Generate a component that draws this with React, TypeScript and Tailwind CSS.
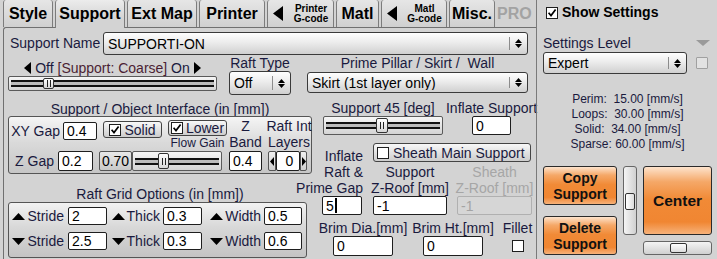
import React from "react";

type Dir = "l" | "r" | "u" | "d";

const POINTS: Record<Dir, string> = {
  l: "10,0 10,10 0,5",
  r: "0,0 0,10 10,5",
  u: "0,10 10,10 5,0",
  d: "0,0 10,0 5,10",
};

function Tri({ dir, w, h, className = "" }: { dir: Dir; w: number; h: number; className?: string }) {
  return (
    <svg width={w} height={h} viewBox="0 0 10 10" preserveAspectRatio="none" className={`shrink-0 ${className}`}>
      <polygon points={POINTS[dir]} fill="currentColor" />
    </svg>
  );
}

function CheckBox({ checked, className = "" }: { checked?: boolean; className?: string }) {
  return (
    <span className={`inline-flex h-[12px] w-[12px] shrink-0 items-center justify-center border border-[#1e1e1e] bg-white ${className}`}>
      {checked && (
        <svg width="10" height="10" viewBox="0 0 10 10">
          <path d="M1.6 4.8 L4 7.6 L8.6 1.6" fill="none" stroke="#000" strokeWidth="1.7" />
        </svg>
      )}
    </span>
  );
}

function Select({ value, className = "" }: { value: string; className?: string }) {
  return (
    <div
      className={`flex items-center rounded-[3px] border border-[#3a3a3a] bg-[linear-gradient(#fefefe,#ececec_45%,#d0d0d0)] ${className}`}
    >
      <span className="flex-1 truncate pl-[4px] text-[14px] leading-none text-black">{value}</span>
      <span className="h-[62%] w-px bg-[#8c8c8c]" />
      <span className="flex w-[17px] flex-col items-center gap-[1px] text-black">
        <Tri dir="u" w={7} h={4} />
        <Tri dir="d" w={7} h={4} />
      </span>
    </div>
  );
}

function Field({
  value,
  className = "",
  disabled,
  caret,
}: {
  value: string;
  className?: string;
  disabled?: boolean;
  caret?: boolean;
}) {
  return (
    <div
      className={`flex shrink-0 items-center rounded-[2px] border pl-[3px] text-[14px] leading-none ${
        disabled ? "border-[#b0b0b0] bg-[#d6d6d6] text-[#a4a4a4]" : "border-[#1e1e1e] bg-white text-black"
      } ${className}`}
    >
      {value}
      {caret && <span className="ml-px h-[15px] w-[2px] bg-black" />}
    </div>
  );
}

function Slider({ className = "", thumb = "" }: { className?: string; thumb?: string }) {
  return (
    <div
      className={`relative flex shrink-0 items-center rounded-[2px] border border-[#5a5a5a] bg-[linear-gradient(#f6f6f6,#d4d4d4)] px-[2px] ${className}`}
    >
      <div className="h-[7px] w-full border-y-2 border-[#111] bg-[#bcbcbc]" />
      <div
        className={`absolute top-px bottom-px flex items-center justify-center gap-[2px] rounded-[2px] border border-[#333] bg-[linear-gradient(#ffffff,#d6d6d6)] ${thumb}`}
      >
        <span className="h-[7px] w-px bg-[#222]" />
        <span className="h-[7px] w-px bg-[#222]" />
      </div>
    </div>
  );
}

function Btn({ children, className = "" }: { children: React.ReactNode; className?: string }) {
  return (
    <div
      className={`flex shrink-0 items-center rounded-[3px] border border-[#444] bg-[linear-gradient(#f8f8f8,#e2e2e2_50%,#cdcdcd)] text-[14px] leading-none ${className}`}
    >
      {children}
    </div>
  );
}

function OrangeBtn({ children, className = "" }: { children: React.ReactNode; className?: string }) {
  return (
    <div
      className={`flex flex-col items-center justify-center rounded-[3px] border border-[#2a2a2a] bg-[linear-gradient(#fde3cc,#f5a868_22%,#f18a36_48%,#f08632_82%,#f7b27a)] font-bold text-[#111] ${className}`}
    >
      {children}
    </div>
  );
}

function GridLabel({ dir, text, className }: { dir: Dir; text: string; className: string }) {
  return (
    <div className={`flex items-center justify-end gap-[2px] text-[14px] leading-none ${className}`}>
      <Tri dir={dir} w={13} h={7} className="text-black" />
      {text}
    </div>
  );
}

const tabs = [
  { label: "Style", w: "w-[50px]" },
  { label: "Support", w: "w-[70px]", active: true },
  { label: "Ext Map", w: "w-[70px]" },
  { label: "Printer", w: "w-[66px]" },
  { label: "Printer|G-code", w: "w-[67px]" },
  { label: "Matl", w: "w-[43px]" },
  { label: "Matl|G-code", w: "w-[66px]" },
  { label: "Misc.", w: "w-[46px]" },
];

export default function App() {
  return (
    <div className="flex h-[259px] w-[717px] overflow-hidden bg-[#d3d3d3] font-['Liberation_Sans',Arial,sans-serif] text-[#1a1a3e]">
      {/* settings panel */}
      <div className="flex w-[536px] flex-col">
        {/* tab bar */}
        <div className="relative z-10 flex h-[28px] items-start gap-[2px] pl-[3px]">
          {tabs.map((t) =>
            t.label.includes("|") ? (
              <div
                key={t.label}
                className={`flex h-[27px] ${t.w} items-center gap-[6px] rounded-t-[3px] border-x border-[#7c7c7c] bg-[linear-gradient(#e6e6e6,#d0d0d0)] pl-[5px] text-black`}
              >
                <Tri dir="l" w={10} h={15} />
                <div className="flex flex-1 flex-col items-center text-[10px] font-bold leading-[10px]">
                  <span>{t.label.split("|")[0]}</span>
                  <span>{t.label.split("|")[1]}</span>
                </div>
              </div>
            ) : (
              <div
                key={t.label}
                className={`flex ${t.w} items-center justify-center rounded-t-[3px] border-x border-[#7c7c7c] text-[16px] font-bold text-black ${
                  t.active ? "h-[28px] bg-[linear-gradient(#ececec,#d3d3d3_70%)]" : "h-[27px] bg-[linear-gradient(#e6e6e6,#d0d0d0)]"
                }`}
              >
                {t.label}
              </div>
            )
          )}
          <div className="flex h-[27px] w-[38px] items-center text-[16px] font-bold text-[#a3a3a3]">PRO</div>
        </div>

        <div className="-mt-px ml-[3px] flex-1 rounded-tl-[3px] border-t border-l border-[#707070]">
          {/* support name */}
          <div className="mt-[4px] flex h-[23px] items-center">
            <div className="w-[99px] pl-[6px] text-[14px]">Support Name</div>
            <Select value="SUPPORTI-ON" className="h-[23px] w-[425px]" />
          </div>

          {/* coarse slider / raft type / prime pillar */}
          <div className="flex h-[40px]">
            <div className="ml-[4px] flex w-[209px] flex-col">
              <div className="flex h-[21px] items-end justify-center gap-[4px] whitespace-nowrap text-[14px] leading-[16px]">
                <Tri dir="l" w={7} h={12} className="mb-[2px] text-black" />
                <span>
                  Off <span className="text-[#4b1f33]">[Support: Coarse]</span> On
                </span>
                <Tri dir="r" w={7} h={12} className="mb-[2px] text-black" />
              </div>
              <Slider className="h-[15px] w-[209px]" thumb="left-[34px] w-[11px]" />
            </div>
            <div className="ml-[12px] flex w-[62px] flex-col">
              <div className="h-[16px] text-center text-[14px] leading-[16px] whitespace-nowrap">Raft Type</div>
              <Select value="Off" className="h-[24px] w-[62px]" />
            </div>
            <div className="ml-[16px] flex w-[221px] flex-col">
              <div className="h-[17px] text-center text-[14px] leading-[16px] whitespace-pre">Prime Pillar / Skirt /  Wall</div>
              <Select value="Skirt (1st layer only)" className="h-[21px] w-[221px]" />
            </div>
          </div>

          <div className="flex">
            {/* left column */}
            <div className="ml-[4px] flex w-[304px] shrink-0 flex-col">
              <div className="h-[21px] pt-[6px] text-center text-[14px] leading-[16px] whitespace-nowrap">
                Support / Object Interface (in [mm])
              </div>
              <div className="flex h-[58px] flex-col rounded-[3px] border border-[#555] bg-[linear-gradient(#f5f5f5,#dadada_45%,#c6c6c6)]">
                <div className="flex h-[34px] items-start">
                  <div className="mt-[5px] flex h-[18px] items-center">
                    <div className="w-[54px] pr-[3px] text-right text-[14px]">XY Gap</div>
                    <Field value="0.4" className="h-[18px] w-[34px]" />
                  </div>
                  <Btn className="mt-[4px] ml-[6px] h-[17px] w-[59px] justify-center gap-[3px]">
                    <CheckBox checked />
                    Solid
                  </Btn>
                  <div className="ml-[6px] flex w-[59px] flex-col items-center">
                    <Btn className="mt-[3px] h-[16px] w-[59px] justify-center gap-[3px]">
                      <CheckBox checked />
                      Lower
                    </Btn>
                    <div className="text-[12px] leading-[14px] whitespace-nowrap">Flow Gain</div>
                  </div>
                  <div className="mt-[1px] ml-[2px] flex w-[33px] flex-col items-center text-[14px] leading-[16px]">
                    <span>Z</span>
                    <span>Band</span>
                  </div>
                  <div className="mt-[1px] ml-[5px] flex w-[44px] flex-col items-center text-[14px] leading-[16px] whitespace-nowrap">
                    <span>Raft Int</span>
                    <span>Layers</span>
                  </div>
                </div>
                <div className="flex h-[20px] items-center">
                  <div className="w-[49px] pr-[4px] text-right text-[14px]">Z Gap</div>
                  <Field value="0.2" className="h-[20px] w-[35px]" />
                  <div className="ml-[6px] flex h-[20px] w-[33px] items-center justify-center rounded-[2px] border border-[#555] bg-[linear-gradient(#e8e8e8,#c9c9c9)] text-[14px] text-black">
                    0.70
                  </div>
                  <Slider className="h-[20px] w-[90px]" thumb="left-[25px] w-[11px]" />
                  <Field value="0.4" className="ml-[7px] h-[20px] w-[33px]" />
                  <div className="ml-[6px] flex h-[20px]">
                    <div className="flex w-[8px] items-center justify-center rounded-l-[2px] border border-[#555] bg-[linear-gradient(#f0f0f0,#cfcfcf)] text-black">
                      <Tri dir="l" w={4} h={9} />
                    </div>
                    <Field value="0" className="h-[20px] w-[24px] justify-center pl-0" />
                    <div className="flex w-[7px] items-center justify-center rounded-r-[2px] border border-[#555] bg-[linear-gradient(#f0f0f0,#cfcfcf)] text-black">
                      <Tri dir="r" w={4} h={9} />
                    </div>
                  </div>
                </div>
              </div>

              <div className="flex h-[28px] items-end justify-center text-[14px] leading-[16px] whitespace-nowrap">
                Raft Grid Options (in [mm])
              </div>
              <div className="flex h-[56px] w-[299px] flex-col rounded-[3px] border border-[#555] bg-[linear-gradient(#f2f2f2,#d8d8d8_45%,#c4c4c4)]">
                <div className="mt-[4px] flex h-[18px]">
                  <GridLabel dir="u" text="Stride" className="w-[59px] pr-[4px]" />
                  <Field value="2" className="h-[18px] w-[39px]" />
                  <GridLabel dir="u" text="Thick" className="w-[56px] pr-[3px]" />
                  <Field value="0.3" className="h-[18px] w-[39px]" />
                  <GridLabel dir="u" text="Width" className="w-[62px] pr-[3px]" />
                  <Field value="0.5" className="h-[18px] w-[38px]" />
                </div>
                <div className="mt-[7px] flex h-[18px]">
                  <GridLabel dir="d" text="Stride" className="w-[59px] pr-[4px]" />
                  <Field value="2.5" className="h-[18px] w-[39px]" />
                  <GridLabel dir="d" text="Thick" className="w-[56px] pr-[3px]" />
                  <Field value="0.3" className="h-[18px] w-[39px]" />
                  <GridLabel dir="d" text="Width" className="w-[62px] pr-[3px]" />
                  <Field value="0.6" className="h-[18px] w-[38px]" />
                </div>
              </div>
            </div>

            {/* right column */}
            <div className="flex flex-1 flex-col">
              <div className="flex h-[40px]">
                <div className="ml-[11px] flex w-[120px] flex-col items-center">
                  <div className="h-[21px] pt-[5px] text-[14px] leading-[16px] whitespace-nowrap">Support 45 [deg]</div>
                  <Slider className="h-[19px] w-[120px]" thumb="left-[52px] w-[12px]" />
                </div>
                <div className="flex flex-1 flex-col items-center pr-[3px]">
                  <div className="h-[21px] pt-[5px] text-[14px] leading-[16px] whitespace-nowrap">Inflate Support</div>
                  <Field value="0" className="h-[19px] w-[39px]" />
                </div>
              </div>

              <div className="flex">
                <div className="flex w-[51px] flex-col items-end pt-[13px] text-[14px] leading-[16px] whitespace-nowrap">
                  <span>Inflate</span>
                  <span>Raft &amp;</span>
                  <span>Prime Gap</span>
                  <Field value="5" caret className="mr-px h-[19px] w-[40px]" />
                </div>
                <div className="ml-[10px] flex w-[160px] flex-col">
                  <Btn className="mt-[8px] h-[19px] w-[158px] gap-[4px] pl-[3px] whitespace-nowrap">
                    <CheckBox />
                    Sheath Main Support
                  </Btn>
                  <div className="mt-[2px] flex">
                    <div className="flex w-[74px] flex-col items-center text-[14px] leading-[16px] whitespace-nowrap">
                      <span>Support</span>
                      <span>Z-Roof [mm]</span>
                      <Field value="-1" className="h-[19px] w-[74px]" />
                    </div>
                    <div className="ml-[10px] flex w-[75px] flex-col items-center text-[14px] leading-[16px] whitespace-nowrap text-[#a6a6a6]">
                      <span>Sheath</span>
                      <span>Z-Roof [mm]</span>
                      <Field value="-1" disabled className="h-[19px] w-[75px]" />
                    </div>
                  </div>
                </div>
              </div>

              <div className="mt-[5px] flex text-[14px] leading-[16px] whitespace-nowrap">
                <div className="flex w-[102px] flex-col items-center">
                  <span>Brim Dia.[mm]</span>
                  <Field value="0" className="h-[20px] w-[60px]" />
                </div>
                <div className="flex w-[78px] flex-col items-center">
                  <span>Brim Ht.[mm]</span>
                  <Field value="0" className="h-[20px] w-[60px]" />
                </div>
                <div className="flex w-[51px] flex-col items-center">
                  <span>Fillet</span>
                  <CheckBox className="mt-[4px]" />
                </div>
              </div>
            </div>
          </div>
        </div>
      </div>

      {/* right sidebar */}
      <aside className="flex flex-1 flex-col border-l border-[#7a7a7a] px-[6px]">
        <div className="mt-[6px] flex h-[13px] items-center gap-[4px] pl-[3px]">
          <CheckBox checked />
          <span className="text-[14px] font-bold text-black">Show Settings</span>
        </div>
        <div className="mt-[16px] flex h-[16px] justify-between text-[14px] leading-[16px]">
          <span>Settings Level</span>
          <Tri dir="d" w={14} h={6} className="mt-[5px] mr-[2px] text-[#9a9a9a]" />
        </div>
        <div className="mt-[1px] flex items-center">
          <Select value="Expert" className="h-[22px] w-[144px]" />
          <span className="ml-[9px] h-[12px] w-[12px] rounded-[1px] border border-[#a0a0a0] bg-[#e2e2e2]" />
        </div>
        <div className="mt-[18px] flex flex-col items-center text-[12px] leading-[15px] whitespace-pre">
          <span>Perim:  15.00 [mm/s]</span>
          <span>Loops:  30.00 [mm/s]</span>
          <span>Solid:  34.00 [mm/s]</span>
          <span>Sparse: 60.00 [mm/s]</span>
        </div>
        <div className="mt-[14px] flex gap-[6px]">
          <div className="flex w-[74px] flex-col gap-[11px] text-[14px] leading-[16px]">
            <OrangeBtn className="h-[39px]">
              <span>Copy</span>
              <span>Support</span>
            </OrangeBtn>
            <OrangeBtn className="h-[39px]">
              <span>Delete</span>
              <span>Support</span>
            </OrangeBtn>
          </div>
          <div className="relative h-[69px] w-[14px] rounded-[3px] border border-[#666] bg-[linear-gradient(90deg,#f4f4f4,#d0d0d0)]">
            <div className="absolute top-[26px] left-px h-[17px] w-[10px] rounded-[2px] border border-[#333] bg-[linear-gradient(90deg,#ffffff,#dcdcdc)]" />
          </div>
          <div className="flex w-[69px] flex-col gap-[6px]">
            <OrangeBtn className="h-[69px] bg-[linear-gradient(#fbd2ae,#f39a52_14%,#f18a36_30%,#f08632_88%,#f5a86c)] text-[15.5px]">
              Center
            </OrangeBtn>
            <div className="relative h-[14px] rounded-[3px] border border-[#666] bg-[linear-gradient(#f4f4f4,#d0d0d0)]">
              <div className="absolute top-px left-[26px] h-[10px] w-[17px] rounded-[2px] border border-[#333] bg-[linear-gradient(#ffffff,#dcdcdc)]" />
            </div>
          </div>
        </div>
      </aside>
    </div>
  );
}
